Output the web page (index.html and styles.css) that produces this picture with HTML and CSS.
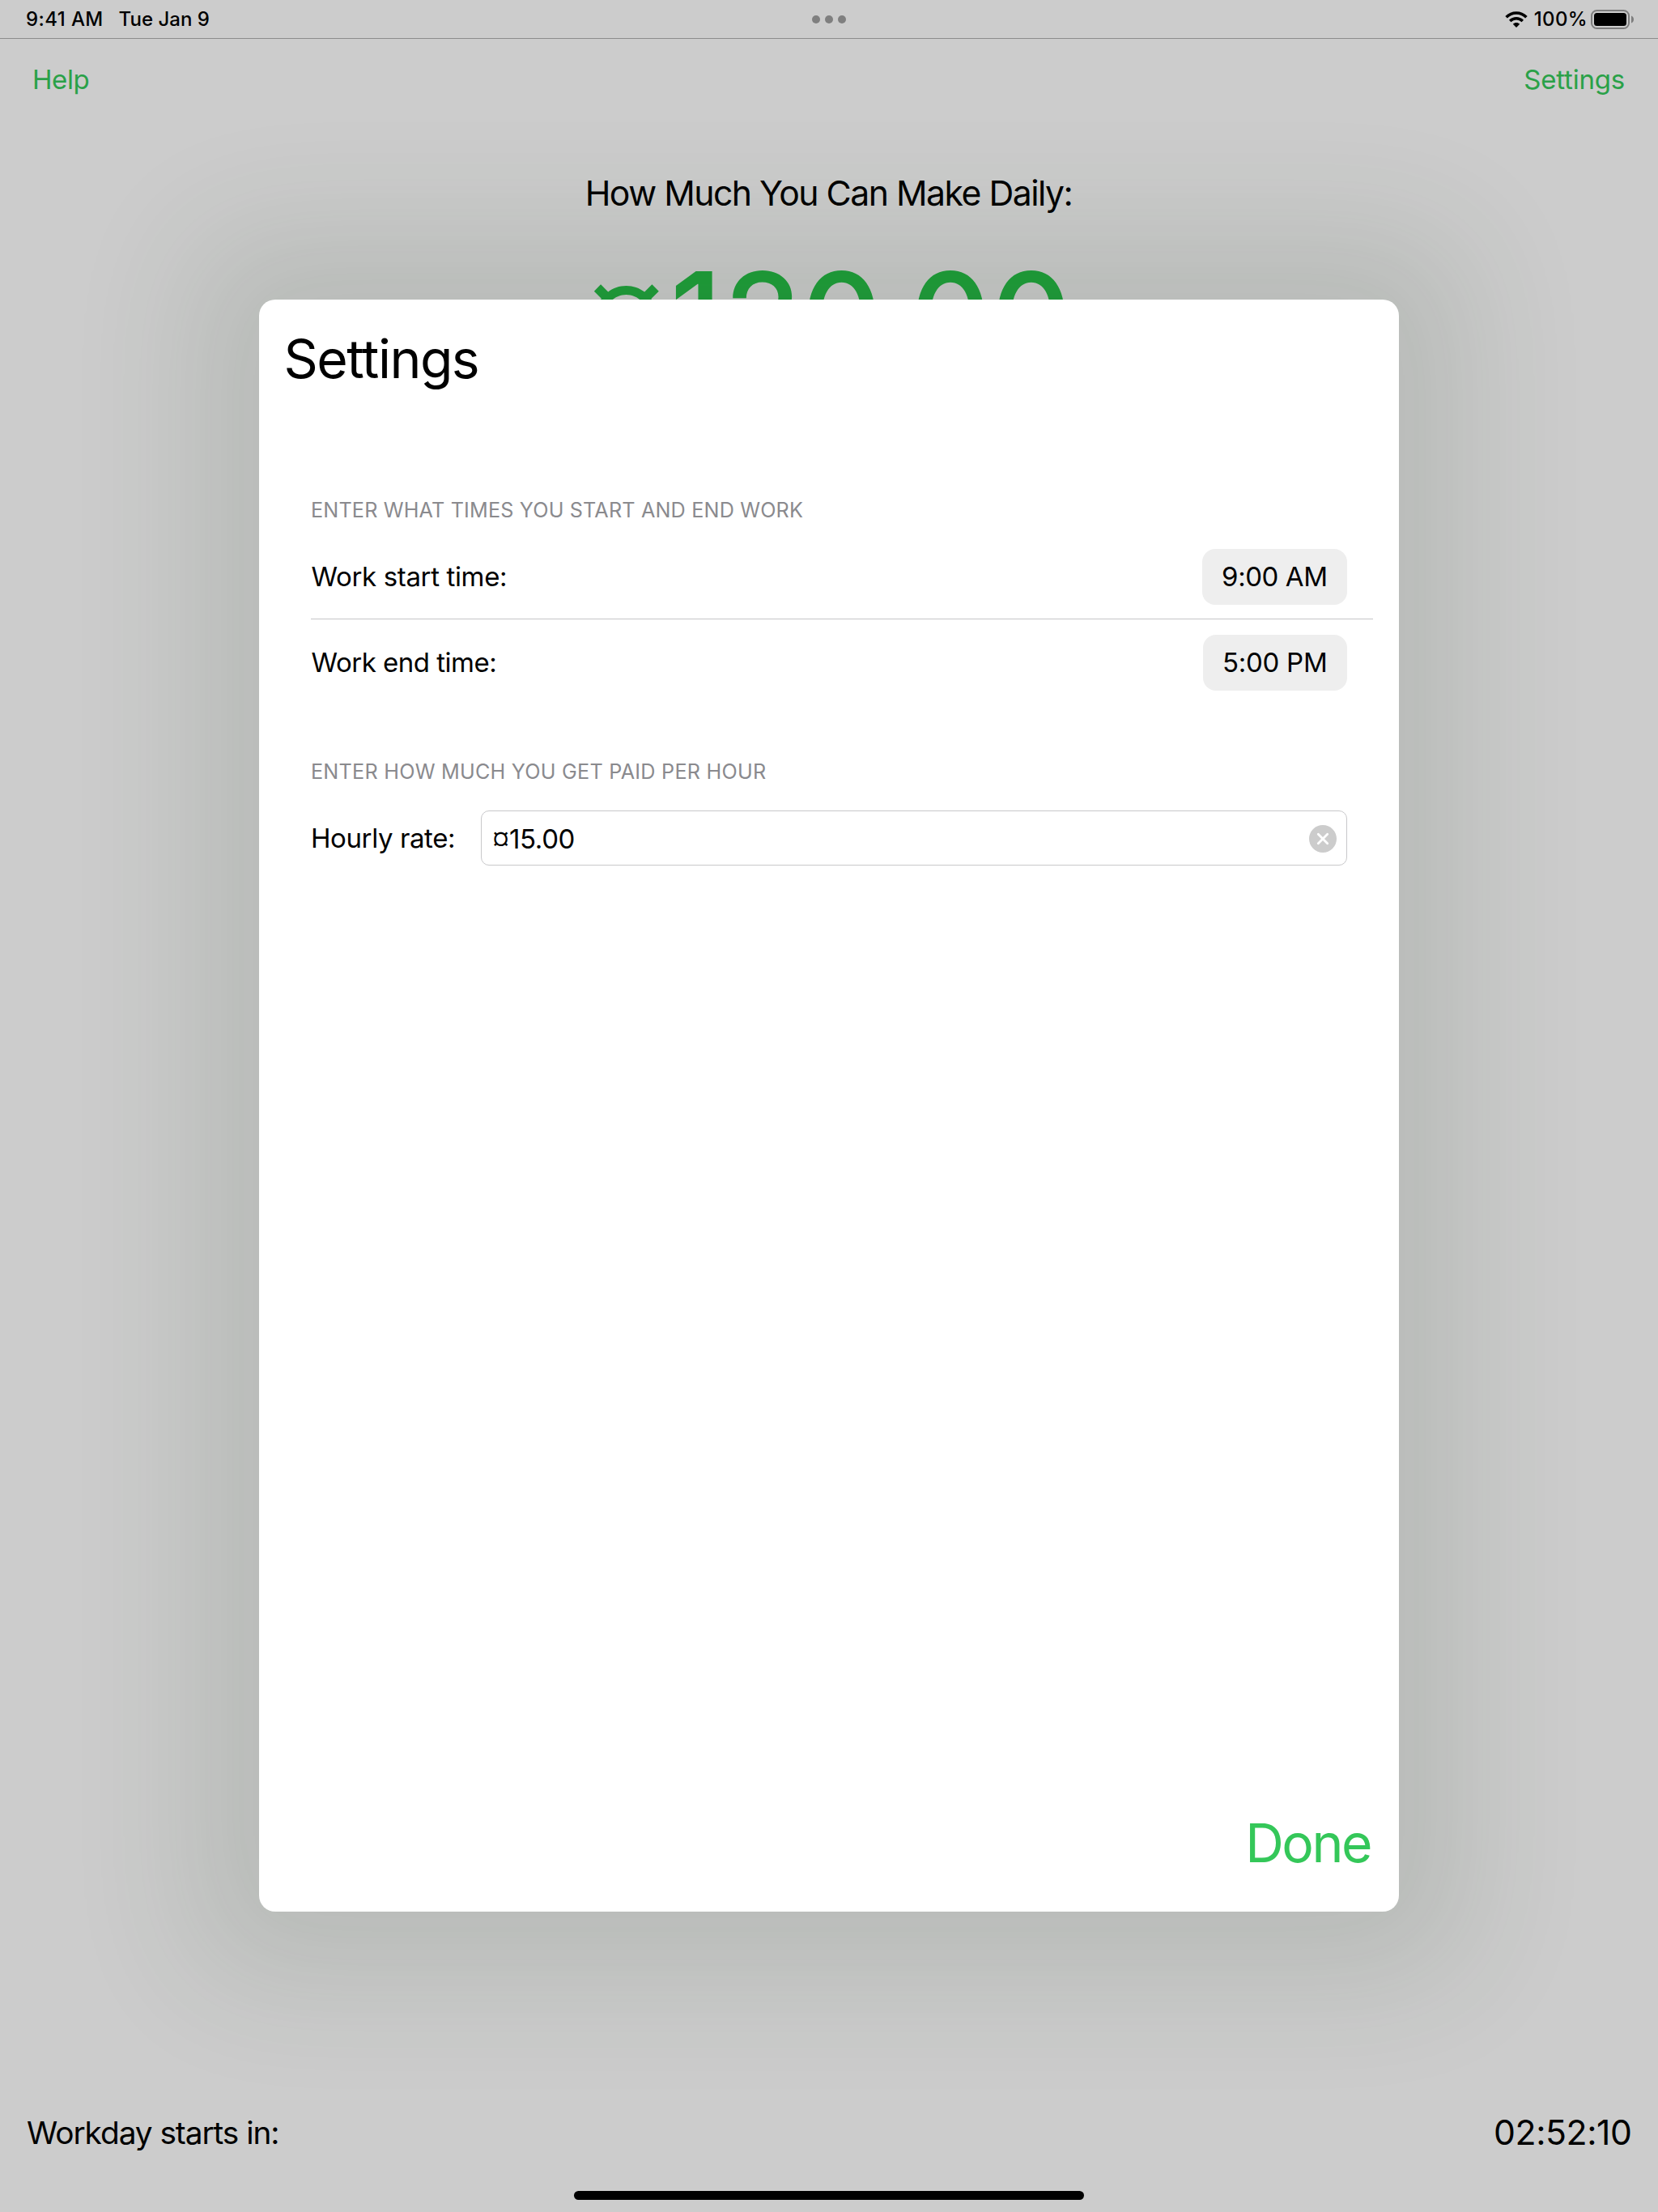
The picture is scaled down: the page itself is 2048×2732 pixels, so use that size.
FILE: index.html
```html
<!DOCTYPE html>
<html lang="en">
<head>
<meta charset="utf-8">
<title>Settings</title>
<link rel="stylesheet" href="styles.css">
</head>
<body>
<div class="screen">
  <header class="status">
    <div class="status-left"><span class="clock">9:41 AM</span><span>Tue Jan 9</span></div>
    <div class="dots"><i></i><i></i><i></i></div>
    <div class="status-right">
      <svg class="wifi" width="28" height="20" viewBox="0 0 28 20">
        <path d="M1.6 7.2C8.6.2 19.4.2 26.4 7.2" fill="none" stroke="#000" stroke-width="3.6"/>
        <path d="M6.2 11.9c4.5-4.3 11.1-4.3 15.6 0" fill="none" stroke="#000" stroke-width="3.5"/>
        <path d="M14 20l-4.2-4.3c2.5-2.2 5.9-2.2 8.4 0z"/>
      </svg>
      <span class="percent">100%</span>
      <svg class="battery" width="54" height="24" viewBox="0 0 54 24">
        <rect x="1" y="1" width="46" height="22" rx="6.5" fill="none" stroke="#7d7d7d" stroke-width="2"/>
        <rect x="4" y="4" width="40" height="16" rx="3.5"/>
        <path d="M50 7.5c4 1.5 4 7.500 0 9z" fill="#7d7d7d"/>
      </svg>
    </div>
  </header>
  <nav class="toolbar"><a class="help">Help</a><a class="open-settings">Settings</a></nav>
  <main class="earnings">
    <h1>How Much You Can Make Daily:</h1>
    <p class="amount"><span class="currency">¤</span><span class="lead">1</span>20<span class="point">.</span>00</p>
  </main>
  <footer class="countdown"><span class="countdown-label">Workday starts in:</span><span class="timer">02:52:10</span></footer>
  <div class="home-indicator"></div>

  <section class="sheet">
    <h2>Settings</h2>
    <h3 class="times-heading">ENTER WHAT TIMES YOU START AND END WORK</h3>
    <div class="row first"><span class="start-label">Work start time:</span><span class="chip start">9:00 AM</span></div>
    <div class="row second"><span class="end-label">Work end time:</span><span class="chip end">5:00 PM</span></div>
    <h3 class="rate-heading">ENTER HOW MUCH YOU GET PAID PER HOUR</h3>
    <div class="rate">
      <span class="rate-label">Hourly rate:</span>
      <div class="field">
        <span class="value"><span class="currency">¤</span>15.00</span>
        <svg width="34" height="34" viewBox="0 0 34 34">
          <circle cx="17" cy="17" r="17" fill="#ccc"/>
          <path d="M11.300 11.300l11.400 11.400M22.700 11.300L11.300 22.700" stroke="#fff" stroke-width="2.800" stroke-linecap="round"/>
        </svg>
      </div>
    </div>
    <a class="done">Done</a>
  </section>
</div>
</body>
</html>
```
FILE: styles.css
```css
* { box-sizing: border-box; }
body { margin: 0; font-family: Inter, "Liberation Sans", sans-serif; color: #000; }
h1, h2, h3, p { margin: 0; font-weight: 400; }
svg { display: block; }
.screen {
  position: relative;
  width: 2048px;
  height: 2732px;
  background: #ccc;
  overflow: hidden;
  display: flex;
  flex-direction: column;
}

.status {
  height: 48px;
  border-bottom: 1px solid #8c8c8c;
  padding: 0 29px 0 32px;
  display: grid;
  grid-template-columns: 1fr auto 1fr;
  font-size: 24px;
  font-weight: 500;
  line-height: 29px;
}
.status-left { display: flex; gap: 19px; padding-top: 9px; }
.clock { letter-spacing: 0.4px; }
.dots { display: flex; gap: 6px; padding-top: 19px; margin-right: 3px; }
.dots i { width: 10px; height: 10px; border-radius: 50%; background: #7f7f7f; }
.status-right { display: flex; justify-content: flex-end; align-items: flex-start; }
.wifi { margin: 14px 8px 0 0; }
.percent { padding-top: 9px; letter-spacing: 0.35px; }
.battery { margin: 12px 0 0 4px; flex: none; }

.toolbar {
  display: flex;
  justify-content: space-between;
  padding: 30px 41px 0 40px;
  font-size: 33px;
  line-height: 40px;
  color: #2aa148;
}
.help { letter-spacing: -0.4px; }
.open-settings { letter-spacing: -0.2px; }

.earnings { flex: 1; text-align: center; padding-top: 95px; }
.earnings h1 { margin-left: -1px; font-size: 42.7px; line-height: 51px; letter-spacing: -1.5px; }
.amount {
  margin: 34px 0 0 1px;
  height: 187px;
  font-size: 155px;
  line-height: 187px;
  font-weight: 500;
  letter-spacing: -0.53px;
  color: #1d9f39;
}
.amount .currency {
  font-size: 128px;
  font-weight: 600;
  line-height: 0;
  vertical-align: 18px;
  margin-right: 6.6px;
}
.lead { margin-right: 3px; }
.point { letter-spacing: -12px; }

.countdown {
  display: flex;
  justify-content: space-between;
  align-items: center;
  padding: 0 32.5px 0 33px;
}
.countdown-label { font-size: 38.8px; line-height: 47px; letter-spacing: -1.05px; }
.timer { font-size: 42.7px; line-height: 51px; letter-spacing: -0.42px; }
.home-indicator {
  align-self: center;
  width: 630px;
  height: 11px;
  margin: 47px 0 15px;
  border-radius: 6px;
  background: #000;
}

.sheet {
  position: absolute;
  left: 320px;
  top: 370px;
  width: 1408px;
  height: 1991px;
  padding: 33px 32px 45px 64px;
  border-radius: 20px;
  background: #fff;
  box-shadow: 0 0 155px 82px rgba(44, 64, 38, 0.123);
  display: flex;
  flex-direction: column;
  font-size: 33px;
  line-height: 40px;
}
.sheet h2 { margin-left: -33.5px; font-size: 66px; line-height: 80px; letter-spacing: -1.5px; }
.sheet h3 { font-size: 25.2px; line-height: 30px; color: #8a8a8e; }
.sheet .times-heading { margin-top: 132px; letter-spacing: 0.16px; }
.sheet .rate-heading { margin-top: 68px; letter-spacing: 0.23px; }
.row { display: flex; justify-content: space-between; align-items: center; }
.first { margin-top: 15px; padding: 18px 32px 17px 0; border-bottom: 1px solid #c6c6c8; }
.second { padding: 19px 32px 17px 0; }
.start-label, .end-label { padding: 0 0 2px 0.6px; }
.start-label { letter-spacing: -0.36px; }
.end-label { letter-spacing: -0.5px; }
.chip {
  height: 69px;
  padding: 14px 24.5px 15px 24px;
  border-radius: 16px;
  background: #eee;
}
.start { letter-spacing: -0.44px; }
.end { letter-spacing: -0.26px; }

.rate {
  display: grid;
  grid-template-columns: 210px 1fr;
  align-items: center;
  margin-top: 33px;
  padding-right: 32px;
}
.rate-label { letter-spacing: -0.4px; }
.field {
  display: flex;
  justify-content: space-between;
  align-items: center;
  height: 68px;
  padding: 1px 12px 0 13.6px;
  border: 1px solid #c8c8ca;
  border-radius: 10px;
}
.value { letter-spacing: -0.35px; }
.value .currency { font-size: 28px; line-height: 0; vertical-align: 3px; margin-right: 0.4px; }

.done {
  margin: auto 2.8px 0 auto;
  font-size: 66px;
  line-height: 80px;
  letter-spacing: -2.4px;
  color: #34c759;
}
```
